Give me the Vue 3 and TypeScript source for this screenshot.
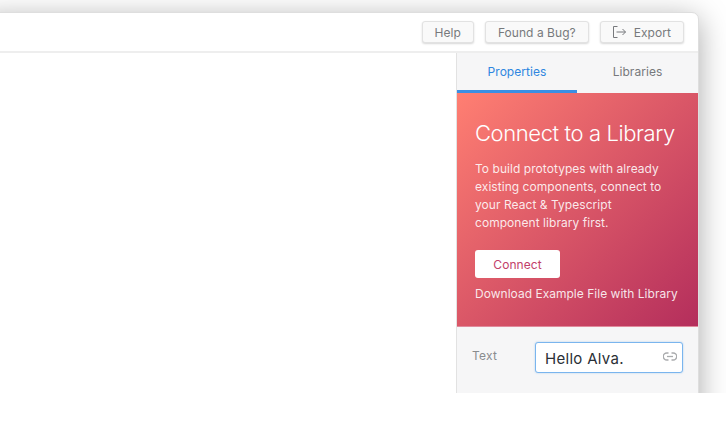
<script setup lang="ts">
import { ref } from "vue";

const tabs = ["Properties", "Libraries"];
const activeTab = ref("Properties");
</script>

<template>
  <div class="stage">
    <div class="window">
      <header class="toolbar">
        <button class="btn">Help</button>
        <button class="btn">Found a Bug?</button>
        <button class="btn">
          <svg class="export-icon" width="14" height="14" viewBox="0 0 14 14" fill="none" stroke="#77797c" stroke-width="1">
            <path d="M4.5 1.5H0.5V12.5H4.5" />
            <path d="M3.5 7H12.5M9.5 4L12.5 7L9.5 10" />
          </svg>
          Export
        </button>
      </header>
      <div class="body">
        <main class="canvas"></main>
        <aside class="panel">
          <nav class="tabs">
            <div
              v-for="tab in tabs"
              :key="tab"
              class="tab"
              :class="{ active: activeTab === tab }"
              @click="activeTab = tab"
            >
              {{ tab }}
            </div>
          </nav>
          <section class="promo">
            <h2>Connect to a Library</h2>
            <p>To build prototypes with already existing components, connect to your React &amp; Typescript component library first.</p>
            <button class="connect">Connect</button>
            <a class="download">Download Example File with Library</a>
          </section>
          <div class="field">
            <label>Text</label>
            <div class="input">
              <span>Hello Alva.</span>
              <svg width="14" height="9" viewBox="0 0 14 9" fill="none" stroke="#a9abad" stroke-width="1.3">
                <path d="M5.5 1H3.8a3.5 3.5 0 0 0 0 7H5.5" />
                <path d="M8.5 1H10.2a3.5 3.5 0 0 1 0 7H8.5" />
                <path d="M4 4.5H10" />
              </svg>
            </div>
          </div>
        </aside>
      </div>
    </div>
  </div>
</template>

<style>
html,
body {
  margin: 0;
  background: #fff;
}
</style>

<style scoped>
.stage {
  width: 726px;
  height: 393px;
  overflow: hidden;
  box-sizing: border-box;
  padding-top: 12px;
  font-family: Inter, "Noto Sans", sans-serif;
}

.window {
  width: 719px;
  height: 480px;
  margin-left: -20px;
  box-sizing: border-box;
  background: #fff;
  border: 1px solid #dedede;
  border-radius: 0 7px 0 0;
  box-shadow: 0 6px 30px rgba(0, 0, 0, 0.34);
  display: flex;
  flex-direction: column;
}

.toolbar {
  height: 40px;
  flex: none;
  box-sizing: border-box;
  border-bottom: 2px solid #eeeeee;
  display: flex;
  justify-content: flex-end;
  align-items: flex-start;
  gap: 11px;
  padding: 8px 14px 0 0;
}

.btn {
  height: 22px;
  padding: 0 12px;
  border: 1px solid #e2e2e2;
  border-radius: 3px;
  background: #f9f9f9;
  box-shadow: 0 1px 2px rgba(0, 0, 0, 0.16);
  color: #77797c;
  font: 12px Inter, sans-serif;
  letter-spacing: 0.05px;
  display: flex;
  align-items: center;
}

.export-icon {
  margin-right: 7px;
}

.body {
  flex: 1;
  display: flex;
}

.canvas {
  flex: 1;
  background: #fff;
}

.panel {
  width: 241px;
  flex: none;
  background: #f6f6f7;
  border-left: 1px solid #e2e2e2;
}

.tabs {
  display: grid;
  grid-template-columns: 120px 121px;
  height: 40px;
}

.tab {
  box-sizing: border-box;
  padding-top: 11px;
  text-align: center;
  font-size: 12px;
  letter-spacing: 0.05px;
  color: #77797c;
}

.tab.active {
  color: #2f86e0;
  border-bottom: 3px solid #3a8fe4;
}

.promo {
  height: 234px;
  box-sizing: border-box;
  padding: 27px 30px 0 18px;
  color: #fff;
  background: linear-gradient(135deg, #ff7f72 0%, #b42e5c 100%);
  border-bottom: 1px solid #e08a9c;
}

h2 {
  margin: 0;
  font-size: 22px;
  font-weight: 300;
  line-height: 27px;
  letter-spacing: -0.4px;
  white-space: nowrap;
}

p {
  margin: 13px 0 0;
  font-size: 12px;
  line-height: 18px;
  letter-spacing: 0.05px;
  color: rgba(255, 255, 255, 0.88);
}

.connect {
  display: block;
  margin-top: 18px;
  width: 85px;
  height: 28px;
  border: none;
  border-radius: 3px;
  background: #fff;
  color: #c2406a;
  font: 12px Inter, sans-serif;
  letter-spacing: 0.05px;
}

.download {
  display: block;
  margin-top: 8px;
  font-size: 12px;
  line-height: 16px;
  letter-spacing: 0.02px;
  white-space: nowrap;
  color: rgba(255, 255, 255, 0.88);
}

.field {
  display: flex;
  align-items: flex-start;
  padding: 15px 15px 0;
}

label {
  width: 63px;
  flex: none;
  padding-top: 6px;
  font-size: 12px;
  line-height: 15px;
  letter-spacing: 0.2px;
  color: #8a8c8f;
}

.input {
  width: 148px;
  height: 31px;
  box-sizing: border-box;
  border: 1px solid #7ab5ee;
  border-radius: 3px;
  background: #fff;
  box-shadow: 0 0 2px rgba(58, 143, 228, 0.4);
  display: flex;
  align-items: center;
  justify-content: space-between;
  padding: 2px 5px 0 9px;
  font-size: 15px;
  letter-spacing: 0.3px;
  color: #2a2f36;
}

.input svg {
  margin-top: -5px;
}
</style>
